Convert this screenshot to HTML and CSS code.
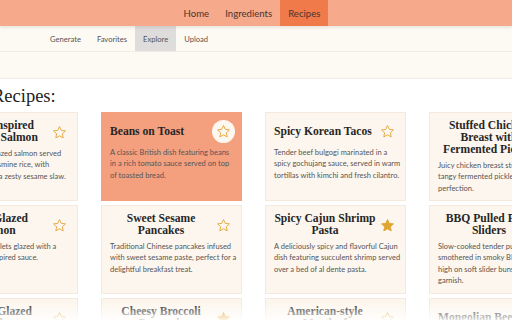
FILE: index.html
```html
<!DOCTYPE html>
<html lang="en">
<head>
  <meta charset="UTF-8">
  <meta name="viewport" content="width=device-width, initial-scale=1.0">
  <title>Explore Recipes</title>
  <link rel="stylesheet" href="styles.css">
</head>
<body>
  <header class="topnav">
    <a href="#">Home</a>
    <a href="#">Ingredients</a>
    <a href="#" class="active">Recipes</a>
  </header>
  <nav class="subnav">
    <a href="#">Generate</a>
    <a href="#">Favorites</a>
    <a href="#" class="active">Explore</a>
    <a href="#">Upload</a>
  </nav>
  <div class="band"></div>

  <main class="explore">
    <h1>Recipes:</h1>
    <div class="grid">
      <!-- row 1 -->
      <div class="card">
        <div class="card-head">
          <h2>Asian-Inspired Teriyaki Salmon</h2>
          <button class="star"><svg viewBox="0 0 24 24"><path d="M12 2.5l2.9 6.1 6.6.8-4.9 4.6 1.3 6.6L12 17.3l-5.9 3.3 1.3-6.6-4.9-4.6 6.6-.8z"/></svg></button>
        </div>
        <p>Juicy teriyaki-glazed salmon served over steamed jasmine rice, with vegetables, and a zesty sesame slaw.</p>
      </div>
      <div class="card hot">
        <div class="card-head">
          <h2>Beans on Toast</h2>
          <button class="star"><svg viewBox="0 0 24 24"><path d="M12 2.5l2.9 6.1 6.6.8-4.9 4.6 1.3 6.6L12 17.3l-5.9 3.3 1.3-6.6-4.9-4.6 6.6-.8z"/></svg></button>
        </div>
        <p>A classic British dish featuring beans in a rich tomato sauce served on top of toasted bread.</p>
      </div>
      <div class="card">
        <div class="card-head">
          <h2>Spicy Korean Tacos</h2>
          <button class="star"><svg viewBox="0 0 24 24"><path d="M12 2.5l2.9 6.1 6.6.8-4.9 4.6 1.3 6.6L12 17.3l-5.9 3.3 1.3-6.6-4.9-4.6 6.6-.8z"/></svg></button>
        </div>
        <p>Tender beef bulgogi marinated in a spicy gochujang sauce, served in warm tortillas with kimchi and fresh cilantro.</p>
      </div>
      <div class="card">
        <div class="card-head">
          <h2>Stuffed Chicken Breast with Fermented Pickles</h2>
          <button class="star"><svg viewBox="0 0 24 24"><path d="M12 2.5l2.9 6.1 6.6.8-4.9 4.6 1.3 6.6L12 17.3l-5.9 3.3 1.3-6.6-4.9-4.6 6.6-.8z"/></svg></button>
        </div>
        <p>Juicy chicken breast stuffed with a tangy fermented pickle mix, baked to perfection.</p>
      </div>

      <!-- row 2 -->
      <div class="card">
        <div class="card-head">
          <h2>Miso Glazed Salmon</h2>
          <button class="star"><svg viewBox="0 0 24 24"><path d="M12 2.5l2.9 6.1 6.6.8-4.9 4.6 1.3 6.6L12 17.3l-5.9 3.3 1.3-6.6-4.9-4.6 6.6-.8z"/></svg></button>
        </div>
        <p>Tender salmon filets glazed with a savory Asian-inspired sauce.</p>
      </div>
      <div class="card">
        <div class="card-head">
          <h2>Sweet Sesame Pancakes</h2>
          <button class="star"><svg viewBox="0 0 24 24"><path d="M12 2.5l2.9 6.1 6.6.8-4.9 4.6 1.3 6.6L12 17.3l-5.9 3.3 1.3-6.6-4.9-4.6 6.6-.8z"/></svg></button>
        </div>
        <p>Traditional Chinese pancakes infused with sweet sesame paste, perfect for a delightful breakfast treat.</p>
      </div>
      <div class="card">
        <div class="card-head">
          <h2>Spicy Cajun Shrimp Pasta</h2>
          <button class="star on"><svg viewBox="0 0 24 24"><path d="M12 2.5l2.9 6.1 6.6.8-4.9 4.6 1.3 6.6L12 17.3l-5.9 3.3 1.3-6.6-4.9-4.6 6.6-.8z"/></svg></button>
        </div>
        <p>A deliciously spicy and flavorful Cajun dish featuring succulent shrimp served over a bed of al dente pasta.</p>
      </div>
      <div class="card">
        <div class="card-head">
          <h2>BBQ Pulled Pork Sliders</h2>
          <button class="star"><svg viewBox="0 0 24 24"><path d="M12 2.5l2.9 6.1 6.6.8-4.9 4.6 1.3 6.6L12 17.3l-5.9 3.3 1.3-6.6-4.9-4.6 6.6-.8z"/></svg></button>
        </div>
        <p>Slow-cooked tender pulled pork smothered in smoky BBQ sauce, piled high on soft slider buns with a pickle garnish.</p>
      </div>

      <!-- row 3 -->
      <div class="card">
        <div class="card-head">
          <h2>Honey Glazed Chicken</h2>
          <button class="star"><svg viewBox="0 0 24 24"><path d="M12 2.5l2.9 6.1 6.6.8-4.9 4.6 1.3 6.6L12 17.3l-5.9 3.3 1.3-6.6-4.9-4.6 6.6-.8z"/></svg></button>
        </div>
        <p>Oven roasted chicken thighs glazed with golden honey and garlic.</p>
      </div>
      <div class="card">
        <div class="card-head">
          <h2>Cheesy Broccoli Casserole</h2>
          <button class="star on"><svg viewBox="0 0 24 24"><path d="M12 2.5l2.9 6.1 6.6.8-4.9 4.6 1.3 6.6L12 17.3l-5.9 3.3 1.3-6.6-4.9-4.6 6.6-.8z"/></svg></button>
        </div>
        <p>Fresh broccoli baked in a creamy cheddar sauce.</p>
      </div>
      <div class="card">
        <div class="card-head">
          <h2>American-style Meatloaf</h2>
          <button class="star"><svg viewBox="0 0 24 24"><path d="M12 2.5l2.9 6.1 6.6.8-4.9 4.6 1.3 6.6L12 17.3l-5.9 3.3 1.3-6.6-4.9-4.6 6.6-.8z"/></svg></button>
        </div>
        <p>A hearty classic with a sweet tomato glaze.</p>
      </div>
      <div class="card">
        <div class="card-head">
          <h2>Mongolian Beef</h2>
          <button class="star"><svg viewBox="0 0 24 24"><path d="M12 2.5l2.9 6.1 6.6.8-4.9 4.6 1.3 6.6L12 17.3l-5.9 3.3 1.3-6.6-4.9-4.6 6.6-.8z"/></svg></button>
        </div>
        <p>Crispy flank steak tossed in a sweet soy sauce.</p>
      </div>
    </div>
  </main>

  <div class="fade"></div>
</body>
</html>
```

FILE: styles.css
```css
body {
  margin: 0;
  font-family: Lato, "Open Sans", sans-serif;
  background-color: #FFFFFF;
  color: #333333;
  overflow: hidden;
  height: 320px;
}
a {
  text-decoration: none;
  color: inherit;
}
.topnav {
  display: flex;
  justify-content: center;
  height: 26px;
  background-color: #F6A98B;
  box-shadow: 0 1px 4px rgba(0, 0, 0, 0.12);
  position: relative;
  z-index: 2;
  padding-right: 8px;
}
.topnav a {
  display: flex;
  align-items: center;
  padding: 0 8px;
  font-size: 9.6px;
  color: #4A3530;
}
.topnav a.active {
  background-color: #F07A4A;
}
.subnav {
  display: flex;
  height: 26px;
  padding-left: 42px;
  background-color: #FDF9F3;
  border-bottom: 1px solid #F1ECE5;
  box-sizing: border-box;
}
.subnav a {
  display: flex;
  align-items: center;
  padding: 0 8px;
  font-size: 7.6px;
  color: #555555;
}
.subnav a.active {
  background-color: #DEDDDB;
}
.band {
  height: 26px;
  background-color: #FDF9F3;
  border-bottom: 1px solid #F0ECE6;
}
.explore {
  overflow: hidden;
}
h1 {
  margin: 6px 0 0 -8px;
  font-family: "Liberation Serif", serif;
  font-weight: normal;
  font-size: 18.5px;
  line-height: 22px;
  color: #222222;
}
.grid {
  display: grid;
  grid-template-columns: repeat(4, 141px);
  column-gap: 23px;
  row-gap: 4px;
  margin: 5px 0 0 -63px;
}
.card {
  background-color: #FDF6EE;
  border: 1px solid #F5E9DD;
  padding: 7px 6px 6px 8px;
  height: 89px;
  box-sizing: border-box;
}
.card.hot {
  background-color: #F4A07F;
  border-color: #F4A07F;
}
.card-head {
  display: flex;
  justify-content: space-between;
  align-items: center;
}
.card h2 {
  margin: 0;
  font-family: "Liberation Serif", serif;
  font-size: 11.6px;
  line-height: 12px;
  text-align: center;
  color: #262626;
}
.star {
  flex: none;
  width: 23px;
  height: 23px;
  border: none;
  border-radius: 50%;
  background: transparent;
  padding: 0;
  display: flex;
  align-items: center;
  justify-content: center;
}
.star svg {
  width: 15px;
  height: 15px;
  fill: none;
  stroke: #E2A83E;
  stroke-width: 1.5;
  stroke-linejoin: round;
}
.star.on svg {
  fill: #DFA431;
  stroke: #DFA431;
}
.hot .star {
  background-color: #FEF7F0;
}
.card p {
  margin: 4px -2px 0 0;
  font-size: 7.5px;
  line-height: 11.4px;
  color: #555555;
}
.fade {
  position: fixed;
  left: 0;
  right: 0;
  bottom: 0;
  height: 18px;
  background: linear-gradient(rgba(255, 255, 255, 0), rgba(255, 255, 255, 0.85));
}
```
